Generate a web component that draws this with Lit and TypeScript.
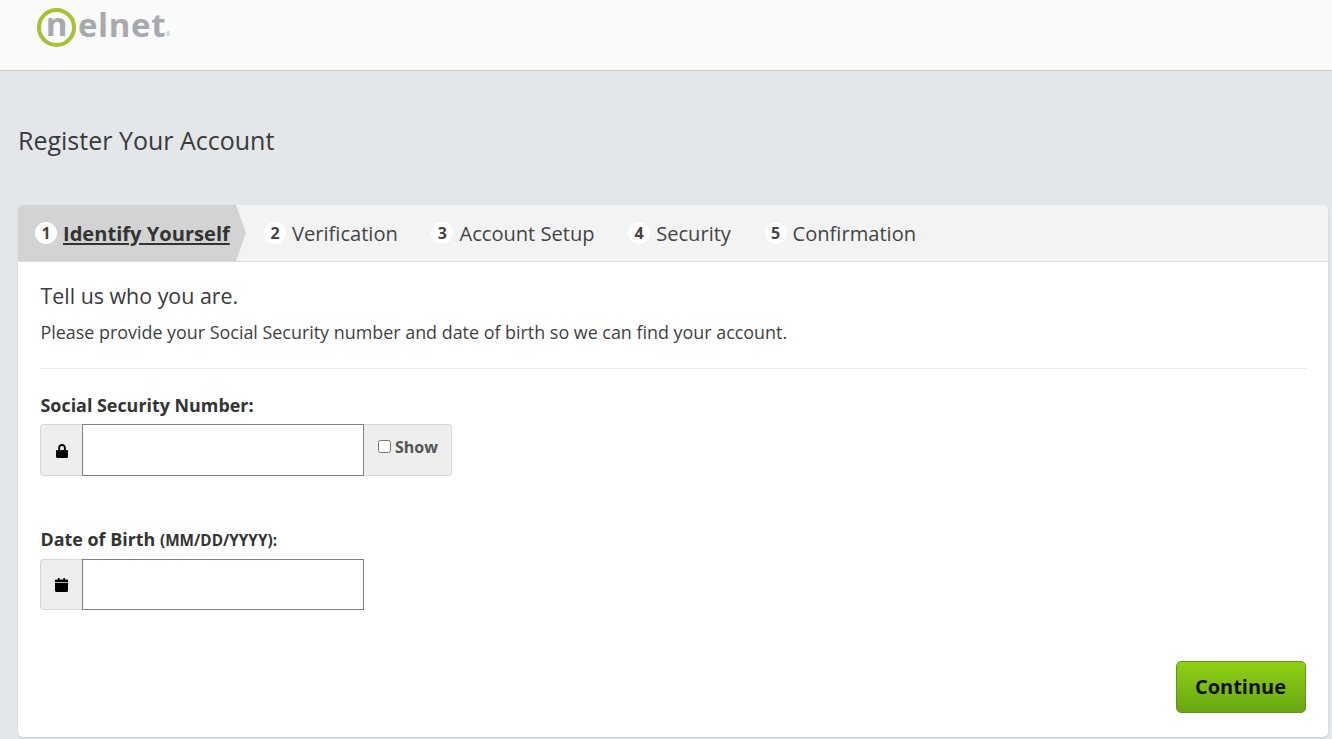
import { LitElement, html, css } from 'lit';
import { customElement } from 'lit/decorators.js';

const STEPS = ['Identify Yourself', 'Verification', 'Account Setup', 'Security', 'Confirmation'];

@customElement('app-root')
export class AppRoot extends LitElement {
  static styles = css`
    :host {
      display: block;
      height: 739px;
      overflow: hidden;
      background: #e4e7ea;
      font-family: 'Open Sans', sans-serif;
      color: #333;
    }

    .header {
      height: 70px;
      box-sizing: content-box;
      background: #fafafa;
      border-bottom: 1px solid #c9c9c9;
      padding-left: 37px;
    }

    .logo {
      display: flex;
      align-items: flex-start;
      padding-top: 8px;
      color: #a6aaae;
      font-weight: 700;
      font-size: 33px;
      line-height: 38px;
    }

    .ring {
      width: 39px;
      height: 39px;
      box-sizing: border-box;
      border: 4px solid #a8c034;
      border-radius: 50%;
      display: flex;
      justify-content: center;
      line-height: 24px;
      background: #fafafa;
      flex: none;
    }

    .rest {
      letter-spacing: 0.6px;
      line-height: 34px;
      margin-left: 2px;
    }

    .reg {
      font-size: 5px;
      line-height: 5px;
      margin-top: 24px;
      font-weight: 400;
    }

    h1 {
      margin: 0;
      padding: 52px 0 48px 18px;
      font-size: 25px;
      line-height: 34px;
      font-weight: 400;
      color: #3a3a3a;
      height: 34px;
      box-sizing: content-box;
    }

    .card {
      margin: 0 4px 0 18px;
      height: 532px;
      display: flex;
      flex-direction: column;
      background: #fff;
      border-radius: 5px;
      box-shadow: 0 1px 2px rgba(0, 0, 0, 0.12);
      overflow: hidden;
    }

    .steps {
      height: 56px;
      flex: none;
      display: flex;
      align-items: stretch;
      background: #f3f3f3;
      border-bottom: 1px solid #dcdcdc;
      font-size: 20.1px;
      color: #444;
    }

    .step {
      display: flex;
      align-items: center;
      gap: 6px;
      margin-right: 33.6px;
    }

    .step:first-child {
      margin-right: 18px;
      padding: 0 16px 0 17px;
      width: 228px;
      box-sizing: border-box;
      background: #d3d3d3;
      clip-path: polygon(0 0, 218px 0, 228px 50%, 218px 100%, 0 100%);
      font-weight: 700;
      color: #333;
    }

    .step:first-child .name {
      text-decoration: underline;
    }

    .num {
      width: 22px;
      height: 22px;
      border-radius: 50%;
      background: #fff;
      display: inline-flex;
      align-items: center;
      justify-content: center;
      font-size: 16px;
      font-weight: 700;
      color: #444;
      flex: none;
    }

    .body {
      flex: 1;
      display: flex;
      flex-direction: column;
      padding: 19px 22px 24px 22.5px;
    }

    .lead {
      font-size: 21.4px;
      line-height: 30px;
      color: #3a3a3a;
    }

    .sub {
      margin-top: 9px;
      font-size: 17.9px;
      line-height: 24px;
      color: #3f3f3f;
    }

    hr {
      margin: 24px 0 24px;
      border: 0;
      border-top: 1px solid #e8e8e8;
      width: 100%;
    }

    .label {
      font-size: 17.9px;
      line-height: 24px;
      font-weight: 700;
      color: #333;
      margin-bottom: 7px;
    }

    .label small {
      font-size: 15.3px;
    }

    .group {
      display: flex;
      height: 52px;
    }

    .group.dob {
      height: 51px;
    }

    .addon {
      width: 42px;
      margin-left: -0.5px;
      box-sizing: border-box;
      background: #eee;
      border: 1px solid #d6d6d6;
      border-right: 0;
      border-radius: 4px 0 0 4px;
      display: flex;
      align-items: center;
      justify-content: center;
    }

    .addon.lock {
      padding-top: 2px;
    }

    input.text {
      width: 282px;
      box-sizing: border-box;
      margin: 0;
      border: 1px solid #808080;
      background: #fff;
      padding: 0 10px;
      outline: none;
    }

    .show {
      width: 88px;
      box-sizing: border-box;
      background: #eee;
      border: 1px solid #d6d6d6;
      border-left: 0;
      border-radius: 0 4px 4px 0;
      display: flex;
      align-items: center;
      gap: 4px;
      padding: 0 0 7px 14px;
      font-size: 16px;
      font-weight: 700;
      color: #555;
    }

    .show input {
      width: 13px;
      height: 13px;
      margin: 0;
    }

    .field + .field {
      margin-top: 51px;
    }

    .actions {
      margin-top: auto;
      display: flex;
      justify-content: flex-end;
    }

    button {
      width: 130px;
      height: 52px;
      padding: 0 1px 2px 0;
      border: 1px solid #62931a;
      border-radius: 5px;
      background: linear-gradient(#8fd016, #68a612);
      font-family: inherit;
      font-size: 20px;
      font-weight: 700;
      color: #111;
      cursor: pointer;
    }
  `;

  render() {
    return html`
      <div class="header">
        <div class="logo">
          <span class="ring">n</span><span class="rest">elnet</span><span class="reg">®</span>
        </div>
      </div>
      <h1>Register Your Account</h1>
      <div class="card">
        <div class="steps">
          ${STEPS.map((s, i) => html`
            <div class="step"><span class="num">${i + 1}</span><span class="name">${s}</span></div>
          `)}
        </div>
        <div class="body">
          <div class="lead">Tell us who you are.</div>
          <div class="sub">Please provide your Social Security number and date of birth so we can find your account.</div>
          <hr />
          <div class="field">
            <div class="label">Social Security Number:</div>
            <div class="group">
              <span class="addon lock">
                <svg width="12" height="14" viewBox="0 0 12 14" fill="#000"><path d="M6 0C3.8 0 2.2 1.6 2.2 3.6V6H1.2C.5 6 0 6.5 0 7.1v5.7c0 .7.5 1.2 1.2 1.2h9.6c.7 0 1.2-.5 1.2-1.2V7.1C12 6.500 11.500 6 10.800 6h-1V3.600C9.800 1.600 8.200 0 6 0zm0 1.900c1.100 0 1.900.8 1.900 1.800V6H4.100V3.700c0-1 .8-1.800 1.900-1.800z"/></svg>
              </span>
              <input class="text" type="text" aria-label="Social Security Number" />
              <label class="show"><input type="checkbox" />Show</label>
            </div>
          </div>
          <div class="field">
            <div class="label">Date of Birth <small>(MM/DD/YYYY):</small></div>
            <div class="group dob">
              <span class="addon">
                <svg width="13" height="14" viewBox="0 0 13 14" fill="#000"><path d="M3 0h1.600v2H3zM8.400 0H10v2H8.400zM1.200 1.600h10.600c.7 0 1.200.5 1.200 1.200V4.300H0V2.800c0-.7.5-1.200 1.200-1.200zM0 4.900h13v7.900c0 .7-.5 1.200-1.200 1.200H1.200C.5 14 0 13.500 0 12.800z"/></svg>
              </span>
              <input class="text" type="text" aria-label="Date of Birth" />
            </div>
          </div>
          <div class="actions"><button>Continue</button></div>
        </div>
      </div>
    `;
  }
}

declare global {
  interface HTMLElementTagNameMap {
    'app-root': AppRoot;
  }
}
